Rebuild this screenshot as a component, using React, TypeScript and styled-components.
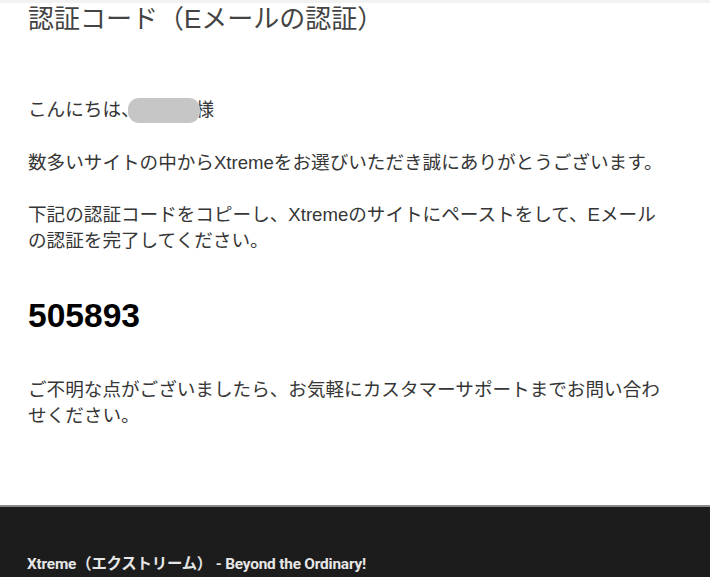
import React from "react";
import styled, { createGlobalStyle } from "styled-components";

const Global = createGlobalStyle`
  html, body {
    margin: 0;
    padding: 0;
    background: #ffffff;
    overflow: hidden;
  }
  body {
    font-family: "Liberation Sans", "Noto Sans CJK JP", Arial, sans-serif;
  }
`;

const Page = styled.div`
  display: flex;
  flex-direction: column;
  min-height: 577px;
  border-top: 3px solid #f2f2f2;
  box-sizing: border-box;
`;

const Content = styled.main`
  display: flex;
  flex-direction: column;
  padding: 0 20px 0 28px;
  max-width: 645px;
  height: 502px;
  box-sizing: content-box;
`;

const Title = styled.h1`
  margin: 0;
  font-size: 26px;
  line-height: 32px;
  font-weight: 400;
  color: #444444;
`;

const Body = styled.div`
  display: flex;
  flex-direction: column;
  margin-top: 62px;
`;

const Para = styled.p<{ $gap?: number }>`
  margin: ${(p) => p.$gap ?? 0}px 0 0;
  font-size: 18.6px;
  line-height: 26px;
  color: #363636;
`;

const Redact = styled.span`
  display: inline-block;
  position: relative;
  z-index: 1;
  width: 72px;
  height: 25px;
  margin-left: -12px;
  margin-right: -4px;
  border-radius: 11px;
  background: #c6c6c6;
  vertical-align: -7px;
`;

const Code = styled.div`
  margin-top: 41px;
  font-family: "Liberation Sans", Arial, sans-serif;
  font-size: 33.6px;
  line-height: 42px;
  font-weight: 700;
  color: #000000;
`;

const Footer = styled.footer`
  flex: 1;
  background: #1c1c1c;
  border-top: 2px solid #8a8a8a;
  padding: 47px 27px 0;
`;

const FooterText = styled.div`
  font-family: "Roboto", "Noto Sans CJK JP", sans-serif;
  font-size: 15.4px;
  font-weight: 700;
  line-height: 20px;
  color: #e6e6e6;
  letter-spacing: -0.2px;
`;

export default function App() {
  return (
    <>
      <Global />
      <Page>
        <Content>
          <Title>認証コード（Eメールの認証）</Title>
          <Body>
            <Para>
              こんにちは、<Redact aria-label="お名前" />様
            </Para>
            <Para $gap={27}>
              数多いサイトの中からXtremeをお選びいただき誠にありがとうございます。
            </Para>
            <Para $gap={26}>
              下記の認証コードをコピーし、Xtremeのサイトにペーストをして、Eメールの認証を完了してください。
            </Para>
            <Code>505893</Code>
            <Para $gap={40}>
              ご不明な点がございましたら、お気軽にカスタマーサポートまでお問い合わせください。
            </Para>
          </Body>
        </Content>
        <Footer>
          <FooterText>Xtreme（エクストリーム） - Beyond the Ordinary!</FooterText>
        </Footer>
      </Page>
    </>
  );
}
